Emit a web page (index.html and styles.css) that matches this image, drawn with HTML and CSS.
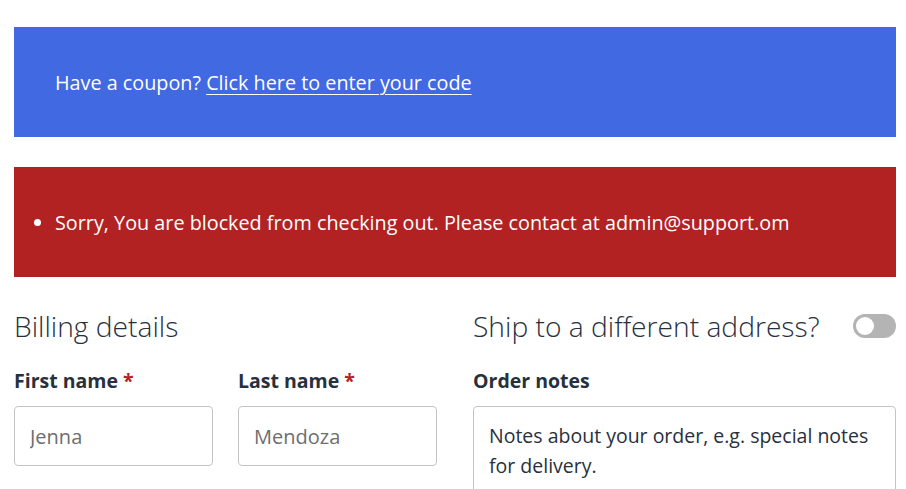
FILE: index.html
```html
<!DOCTYPE html>
<html lang="en">
<head>
    <meta charset="UTF-8">
    <meta name="viewport" content="width=device-width, initial-scale=1.0">
    <title>Checkout</title>
    <link rel="stylesheet" href="styles.css">
</head>
<body>
    <div class="checkout">
        <div class="notice notice-info">
            <p>Have a coupon? <a href="#" class="show-coupon">Click here to enter your code</a></p>
        </div>
        <div class="notice notice-error">
            <ul>
                <li>Sorry, You are blocked from checking out. Please contact at admin@support.om</li>
            </ul>
        </div>
        <div class="columns">
            <div class="col">
                <h3>Billing details</h3>
                <div class="row">
                    <div class="field">
                        <label for="first_name">First name <span class="required">*</span></label>
                        <input type="text" id="first_name" value="Jenna">
                    </div>
                    <div class="field">
                        <label for="last_name">Last name <span class="required">*</span></label>
                        <input type="text" id="last_name" value="Mendoza">
                    </div>
                </div>
            </div>
            <div class="col">
                <div class="ship-head">
                    <h3>Ship to a different address?</h3>
                    <span class="toggle"><span class="knob"></span></span>
                </div>
                <div class="field">
                    <label for="order_notes">Order notes</label>
                    <textarea id="order_notes">Notes about your order, e.g. special notes for delivery.</textarea>
                </div>
            </div>
        </div>
    </div>
</body>
</html>
```

FILE: styles.css
```css
body {
    font-family: "Open Sans", sans-serif;
    margin: 0;
    background-color: white;
    color: #28303d;
}
.checkout {
    padding: 27px 10px 0 14px;
}
.notice {
    height: 110px;
    padding: 0 41px;
    display: flex;
    align-items: center;
    color: white;
    font-size: 19.8px;
    box-sizing: border-box;
}
.notice p {
    margin: 0;
}
.notice-info {
    background-color: #4169e1;
}
.notice-info a {
    color: white;
    text-decoration: underline;
    text-underline-offset: 4px;
    text-decoration-thickness: 1px;
}
.notice-error {
    background-color: #b22222;
    margin-top: 30px;
}
.notice-error ul {
    margin: 0;
    padding: 0;
}
.columns {
    display: grid;
    grid-template-columns: 1fr 1fr;
    column-gap: 36px;
    margin-top: 32px;
}
h3 {
    margin: 0;
    font-size: 28.2px;
    font-weight: 300;
    line-height: 34px;
    color: #28303d;
}
.ship-head {
    display: flex;
    justify-content: space-between;
    align-items: center;
}
.toggle {
    width: 43px;
    height: 24px;
    border-radius: 12px;
    background-color: #b4b4b4;
    display: flex;
    align-items: center;
    padding: 0 3px;
    box-sizing: border-box;
}
.knob {
    width: 18px;
    height: 18px;
    border-radius: 50%;
    background-color: white;
}
.row {
    display: flex;
    gap: 25px;
}
.field {
    display: flex;
    flex-direction: column;
    margin-top: 26px;
}
label {
    font-size: 19.5px;
    font-weight: 700;
    line-height: 24px;
    margin-bottom: 13px;
}
.required {
    color: #b22222;
}
input, textarea {
    font-family: "Open Sans", sans-serif;
    border: 1px solid #c4c4c4;
    border-radius: 4px;
    padding: 0 15px;
    box-sizing: border-box;
}
input {
    width: 199px;
    height: 60px;
    font-size: 20px;
    color: #6e6e6e;
}
textarea {
    width: 100%;
    height: 100px;
    padding-top: 14px;
    font-size: 19.5px;
    line-height: 30px;
    color: #28303d;
    resize: vertical;
}
```
